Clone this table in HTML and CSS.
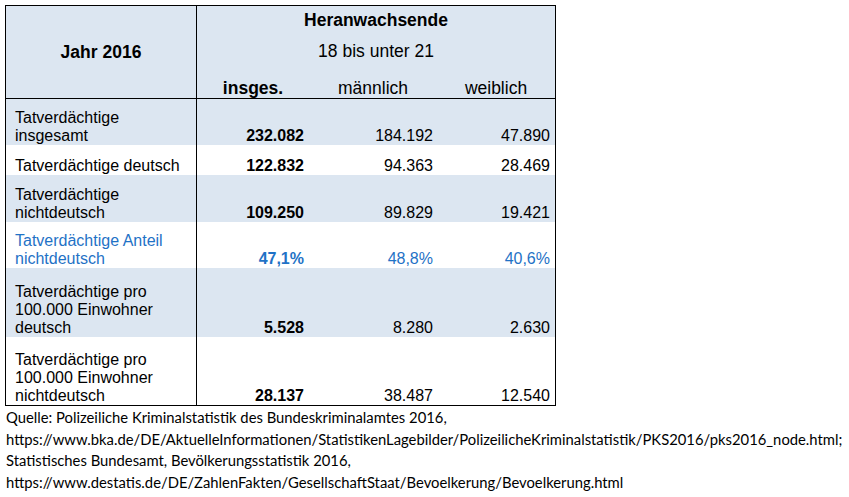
FILE: index.html
```html
<!DOCTYPE html>
<html lang="de">
<head>
<meta charset="utf-8">
<title>Tatverdächtige Heranwachsende 2016</title>
<link rel="stylesheet" href="styles.css">
</head>
<body>
<div class="page">
  <div class="stats">
    <div class="head year">Jahr 2016</div>
    <div class="head span3 top">Heranwachsende</div>
    <div class="head span3 mid">18 bis unter 21</div>
    <div class="head sub bold">insges.</div>
    <div class="head sub">männlich</div>
    <div class="head sub">weiblich</div>

    <div class="row shade">
      <div class="label">Tatverdächtige<br>insgesamt</div>
      <div class="num c2 bold">232.082</div>
      <div class="num c3">184.192</div>
      <div class="num c4">47.890</div>
    </div>
    <div class="row">
      <div class="label">Tatverdächtige deutsch</div>
      <div class="num c2 bold">122.832</div>
      <div class="num c3">94.363</div>
      <div class="num c4">28.469</div>
    </div>
    <div class="row shade">
      <div class="label">Tatverdächtige<br>nichtdeutsch</div>
      <div class="num c2 bold">109.250</div>
      <div class="num c3">89.829</div>
      <div class="num c4">19.421</div>
    </div>
    <div class="row blue">
      <div class="label">Tatverdächtige Anteil<br>nichtdeutsch</div>
      <div class="num c2 bold">47,1%</div>
      <div class="num c3">48,8%</div>
      <div class="num c4">40,6%</div>
    </div>
    <div class="row shade">
      <div class="label">Tatverdächtige pro<br>100.000 Einwohner<br>deutsch</div>
      <div class="num c2 bold">5.528</div>
      <div class="num c3">8.280</div>
      <div class="num c4">2.630</div>
    </div>
    <div class="row">
      <div class="label">Tatverdächtige pro<br>100.000 Einwohner<br>nichtdeutsch</div>
      <div class="num c2 bold">28.137</div>
      <div class="num c3">38.487</div>
      <div class="num c4">12.540</div>
    </div>
  </div>
  <div class="source">
    <div class="line">Quelle: Polizeiliche Kriminalstatistik des Bundeskriminalamtes 2016,</div>
    <div class="line">https://www.bka.de/DE/AktuelleInformationen/StatistikenLagebilder/PolizeilicheKriminalstatistik/PKS2016/pks2016_node.html;</div>
    <div class="line">Statistisches Bundesamt, Bevölkerungsstatistik 2016,</div>
    <div class="line">https://www.destatis.de/DE/ZahlenFakten/GesellschaftStaat/Bevoelkerung/Bevoelkerung.html</div>
  </div>
</div>
</body>
</html>
```
FILE: styles.css
```css
* {
  box-sizing: border-box;
}

html, body {
  margin: 0;
  padding: 0;
  background: #ffffff;
}

.page {
  padding: 5px 0 0 5px;
  color: #000000;
}

.stats {
  display: grid;
  width: 551px;
  grid-template-columns: 191px 112px 128px 118px;
  grid-template-rows: 25px 31px 37px 46px 30px 47px 46px 69px 68px;
  border: 1px solid #000000;
  font-family: "Liberation Sans", Arial, sans-serif;
  font-size: 16px;
  line-height: 18px;
}

.head {
  background: #dce6f1;
  font-size: 17.5px;
  line-height: 20px;
  display: flex;
  align-items: flex-end;
  justify-content: center;
  padding-bottom: 1px;
}

.year {
  grid-row: 1 / 4;
  grid-column: 1;
  align-items: center;
  font-weight: bold;
  border-right: 1px solid #000000;
  border-bottom: 1px solid #000000;
  padding-bottom: 0;
}

.span3 {
  grid-column: 2 / 5;
}

.top {
  font-weight: bold;
}

.sub {
  border-bottom: 1px solid #000000;
  padding-bottom: 0;
}

.bold {
  font-weight: bold;
}

.row {
  display: contents;
}

.row > div {
  background: #ffffff;
  display: flex;
  align-items: flex-end;
}

.row.shade > div {
  background: #dce6f1;
}

.row.blue > div {
  color: #1f72c6;
}

.label {
  padding-left: 9px;
  border-right: 1px solid #000000;
}

.num {
  justify-content: flex-end;
}

.c2 {
  padding-right: 5px;
}

.c3 {
  padding-right: 4px;
}

.c4 {
  padding-right: 5px;
}

.source {
  padding-left: 1px;
  padding-top: 1px;
  font-family: Lato, "Open Sans", sans-serif;
  font-size: 14.8px;
  line-height: 21.7px;
  color: #000000;
}

.line {
  white-space: nowrap;
}
```
